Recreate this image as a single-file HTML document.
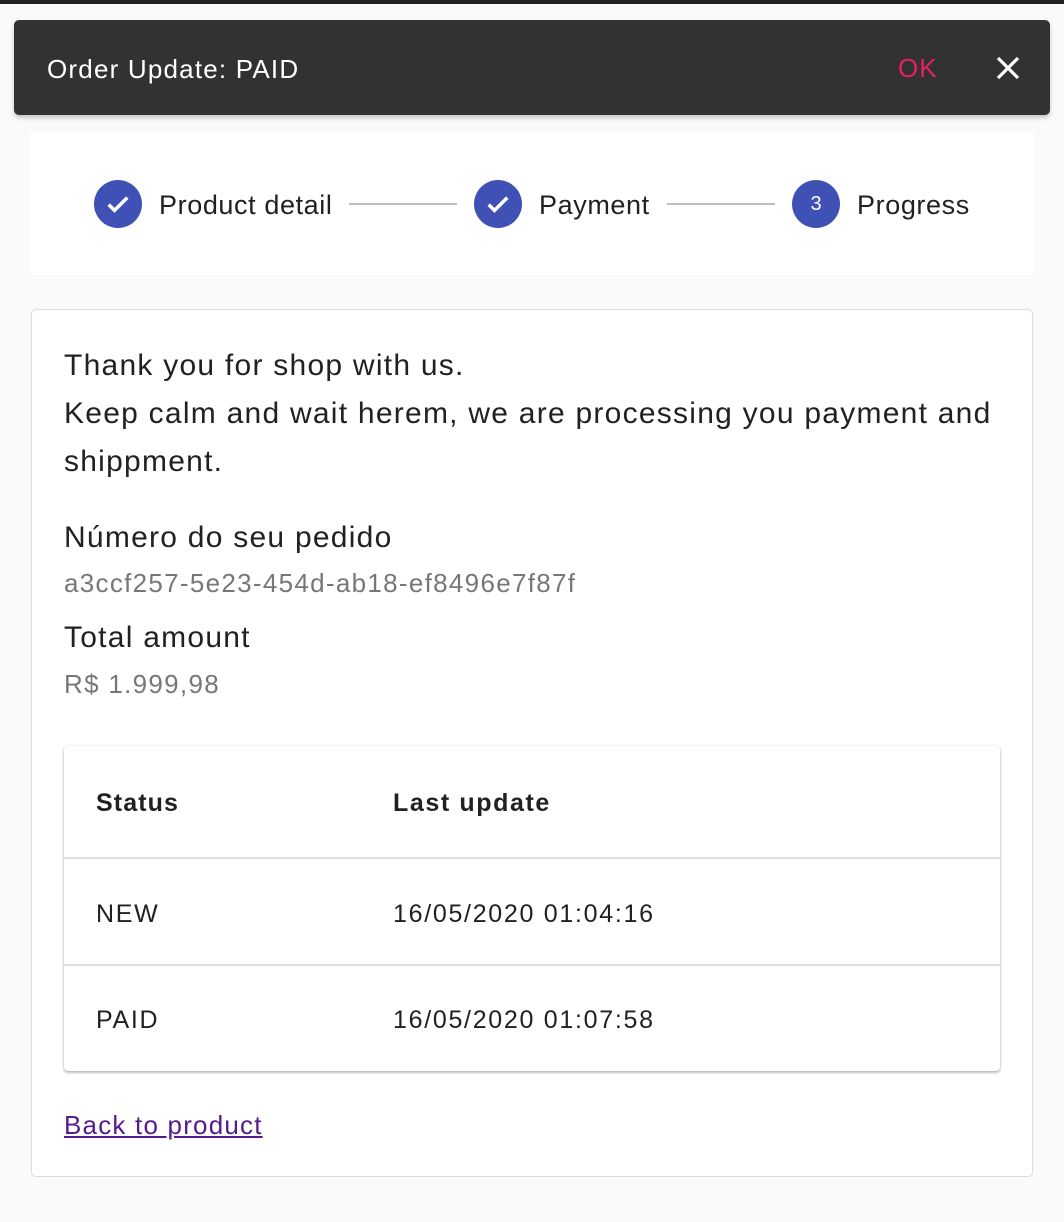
<!DOCTYPE html>
<html><head><style>
*{margin:0;padding:0;box-sizing:border-box}
body{width:1064px;height:1222px;background:#fafafa;font-family:"Liberation Sans",Arial,sans-serif;position:relative;overflow:hidden;color:#212121}
.a{position:absolute;white-space:nowrap}
.topbar{left:0;top:0;width:1064px;height:4px;background:#222}
.snack{left:14px;top:20px;width:1036px;height:95px;background:#323232;border-radius:5px;box-shadow:0 3px 5px rgba(0,0,0,.2)}
.circ{width:48px;height:48px;border-radius:50%;background:#3f51b5;color:#fff;display:flex;align-items:center;justify-content:center;font-size:20px}
.line{height:2px;background:#bdbdbd}
.lbl{font-size:27px;color:#212121;letter-spacing:.6px}
.t{font-size:30px;letter-spacing:1.25px}
.g{font-size:26px;color:#777;letter-spacing:1.3px}
.td{font-size:25px;letter-spacing:1.7px}
</style></head><body>
<div class="a topbar"></div>
<div class="a snack"></div>
<div class="a" style="left:47px;top:54px;font-size:26px;color:#fff;letter-spacing:1.2px">Order Update: PAID</div>
<div class="a" style="left:898px;top:53px;font-size:26px;color:#e91e63;letter-spacing:1px">OK</div>
<svg class="a" style="left:995px;top:55px" width="26" height="26" viewBox="0 0 26 26"><path d="M3 3L23 23M23 3L3 23" stroke="#fff" stroke-width="3.2"/></svg>

<div class="a" style="left:30px;top:132px;width:1004px;height:143px;background:#fff"></div>
<div class="a circ" style="left:94px;top:180px"><svg width="28" height="28" viewBox="0 0 24 24"><path d="M4 12.5l5 5L20 6.5" stroke="#fff" stroke-width="3" fill="none"/></svg></div>
<div class="a lbl" style="left:159px;top:190px">Product detail</div>
<div class="a line" style="left:349px;top:203px;width:108px"></div>
<div class="a circ" style="left:474px;top:180px"><svg width="28" height="28" viewBox="0 0 24 24"><path d="M4 12.5l5 5L20 6.5" stroke="#fff" stroke-width="3" fill="none"/></svg></div>
<div class="a lbl" style="left:539px;top:190px">Payment</div>
<div class="a line" style="left:667px;top:203px;width:108px"></div>
<div class="a circ" style="left:792px;top:180px">3</div>
<div class="a lbl" style="left:857px;top:190px">Progress</div>

<div class="a" style="left:31px;top:309px;width:1002px;height:868px;background:#fff;border:1px solid #ddd;border-radius:5px"></div>
<div class="a t" style="left:64px;top:349px">Thank you for shop with us.</div>
<div class="a t" style="left:64px;top:397px">Keep calm and wait herem, we are processing you payment and</div>
<div class="a t" style="left:64px;top:445px">shippment.</div>
<div class="a t" style="left:64px;top:521px">Número do seu pedido</div>
<div class="a g" style="left:64px;top:568px">a3ccf257-5e23-454d-ab18-ef8496e7f87f</div>
<div class="a t" style="left:64px;top:621px">Total amount</div>
<div class="a g" style="left:64px;top:669px">R$ 1.999,98</div>

<div class="a" style="left:64px;top:746px;width:936px;height:325px;background:#fff;border-radius:4px;box-shadow:0 1px 3px rgba(0,0,0,.25),0 2px 2px rgba(0,0,0,.12)"></div>
<div class="a td" style="left:96px;top:789px;font-weight:bold;letter-spacing:1.1px">Status</div>
<div class="a td" style="left:393px;top:789px;font-weight:bold;letter-spacing:1.6px">Last update</div>
<div class="a" style="left:64px;top:857px;width:936px;height:2px;background:#e0e0e0"></div>
<div class="a td" style="left:96px;top:900px">NEW</div>
<div class="a td" style="left:393px;top:900px">16/05/2020 01:04:16</div>
<div class="a" style="left:64px;top:964px;width:936px;height:2px;background:#e0e0e0"></div>
<div class="a td" style="left:96px;top:1006px">PAID</div>
<div class="a td" style="left:393px;top:1006px">16/05/2020 01:07:58</div>

<a class="a" style="left:64px;top:1110px;font-size:26px;color:#551a8b;text-decoration:underline;letter-spacing:1.2px">Back to product</a>
</body></html>
